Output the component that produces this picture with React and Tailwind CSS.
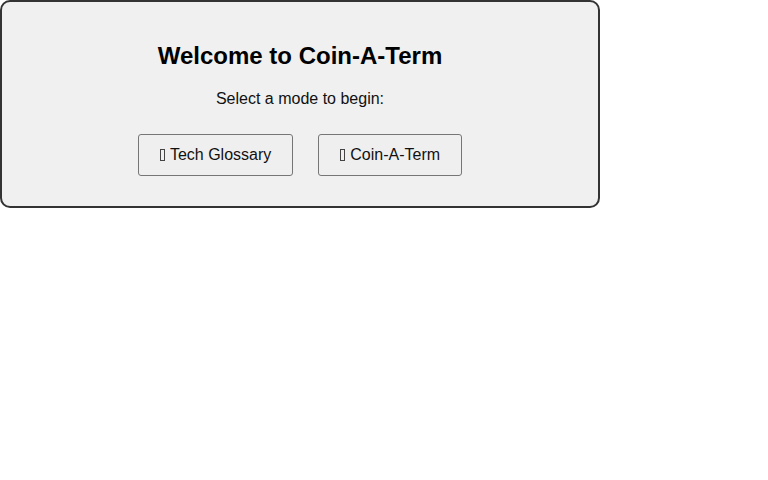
import React from 'react';

const modes = ['Tech Glossary', 'Coin-A-Term'];

// missing-glyph box, as the emoji shows in the reference
function Tofu() {
  return <span className="inline-block w-[5px] h-[12px] border border-[#444] align-[-1px] mr-[5px]" />;
}

export default function App() {
  return (
    <div className="w-[768px] h-[480px] bg-white font-['Liberation_Sans',Arial,sans-serif] text-black">
      <div className="w-[600px] border-2 border-[#333] rounded-[10px] bg-[#f0f0f0] px-5 pt-[20px] pb-[30px] text-center">
        <h1 className="text-[24px] leading-[28px] font-bold my-[20px]">Welcome to Coin-A-Term</h1>
        <p className="text-[16px] leading-[18px] text-[#111]">Select a mode to begin:</p>
        <div className="flex justify-center gap-[25px] mt-[26px]">
          {modes.map((m) => (
            <button
              key={m}
              className="h-[42px] px-[21px] text-[16px] border border-[#767676] rounded-[3px] bg-[#efefef] text-[#111]"
            >
              <Tofu />
              {m}
            </button>
          ))}
        </div>
      </div>
    </div>
  );
}
